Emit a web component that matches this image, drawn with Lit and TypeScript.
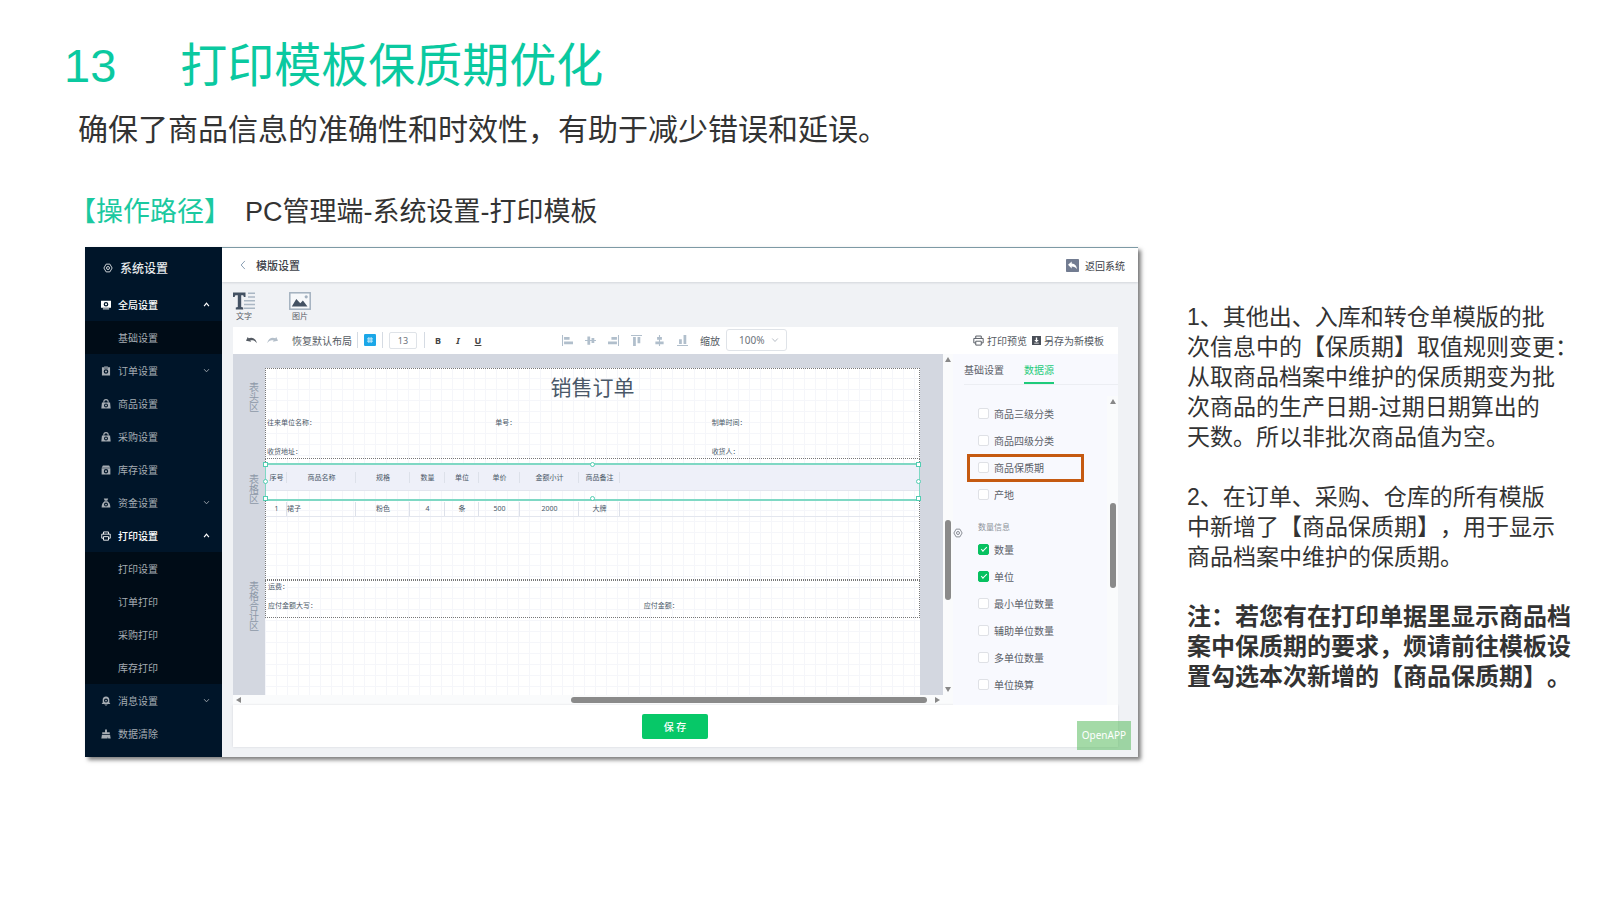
import { LitElement, html, css, svg, nothing } from "lit";
import { customElement, property } from "lit/decorators.js";
import { classMap } from "lit/directives/class-map.js";

const HEX = "M5 1.8h6L14.6 8 11 14.2H5L1.4 8z";

/* Icon shapes on a 16 x 16 field; colour comes from currentColor. */
const ICONS: Record<string, unknown> = {
  nut: svg`<path d=${HEX} fill="none" stroke="currentColor" stroke-width="1.4"/><circle cx="8" cy="8" r="2.4" fill="none" stroke="currentColor" stroke-width="1.4"/>`,
  monitor: svg`<path fill-rule="evenodd" fill="currentColor" d="M0 1h16v11.500H0zM8 3a3.700 3.700 0 1 0 0 7.400A3.700 3.700 0 0 0 8 3z"/><circle cx="8" cy="6.700" r="1.700" fill="currentColor"/><path fill="currentColor" d="M3 13.500h10V15H3z"/>`,
  clipboard: svg`<path fill-rule="evenodd" fill="currentColor" d="M1.500 2H5V.8h6V2h3.500v13.200h-13zM8 5a3.700 3.700 0 1 0 0 7.400A3.700 3.700 0 0 0 8 5z"/><circle cx="8" cy="8.700" r="1.700" fill="currentColor"/><path d="M5 3.300h6" stroke="#001529"/>`,
  bag: svg`<path d="M4.500 6V4.500a3.500 3.500 0 0 1 7 0V6" fill="none" stroke="currentColor" stroke-width="1.700"/><path fill-rule="evenodd" fill="currentColor" d="M1.500 5.500h13L15.500 15H.5zM8 7a3.200 3.200 0 1 0 0 6.400A3.200 3.200 0 0 0 8 7z"/><circle cx="8" cy="10.200" r="1.500" fill="currentColor"/>`,
  store: svg`<path fill="currentColor" d="M3 .8h10l2 3.400H1z"/><path fill-rule="evenodd" fill="currentColor" d="M1 5.200h14V15H1zM8 6.500a3.500 3.500 0 1 0 0 7 3.500 3.500 0 0 0 0-7z"/><circle cx="8" cy="10" r="1.600" fill="currentColor"/>`,
  money: svg`<path fill="currentColor" d="M4.500.8h7L10 4.200H6z"/><path fill-rule="evenodd" fill="currentColor" d="M5.500 5.200h5C13.500 7.500 15 10.500 15 15H1c0-4.500 1.500-7.500 4.500-9.800zM8 7.200a3.200 3.200 0 1 0 0 6.400 3.200 3.200 0 0 0 0-6.400z"/><circle cx="8" cy="10.400" r="1.400" fill="currentColor"/>`,
  printer: svg`<g fill="none" stroke="currentColor" stroke-width="1.400"><path d="M4 5V1.500h8V5M4 11.500H1.200V5h13.600v6.500H12"/><path d="M4 9h8v5.700H4z"/></g>`,
  bell: svg`<path fill-rule="evenodd" fill="currentColor" d="M8 .6c3.500 0 5.300 2.500 5.300 5.500v4.200L15 12.700H1l1.700-2.400V6.100C2.700 3.100 4.500.6 8 .6zM8 4a3.200 3.200 0 1 0 0 6.400A3.200 3.200 0 0 0 8 4z"/><circle cx="8" cy="7.200" r="1.400" fill="currentColor"/><path fill="currentColor" d="M5 13.700h6L8 15.600z"/>`,
  broom: svg`<path fill="currentColor" d="M6.500.8h3V5H14v3H2V5h4.500zM1.500 9h13l1 6.300h-4l-.5-2.800-.5 2.800H.5z"/>`,
  up: svg`<path d="M2.500 11.500 8 5l5.500 6.500" fill="none" stroke="currentColor" stroke-width="2.800"/>`,
  down: svg`<path d="M2.500 5l5.500 6 5.500-6" fill="none" stroke="currentColor" stroke-width="2"/>`,
  left: svg`<path d="M11 1.500 5 8l6 6.500" fill="none" stroke="currentColor" stroke-width="1.600"/>`,
  undo: svg`<path fill="currentColor" d="M0 8.500 2.500 3l1.400 1.800C8.500 2.500 14 4.500 15.800 12c-2.600-4-6-5-9.600-3.900l1.400 1.800z"/>`,
  redo: svg`<path fill="currentColor" d="M16 8.500 13.500 3l-1.400 1.800C7.500 2.500 2 4.500.2 12c2.600-4 6-5 9.600-3.900L8.400 9.900z"/>`,
  cells: svg`<rect width="16" height="16" rx="1.500" fill="#1ba7e8"/><path d="M6.500 4v8M9.500 4v8M4 6.500h8M4 9.500h8" stroke="#d5effb" stroke-width="1.200"/>`,
  alignLeft: svg`<path fill="currentColor" d="M0 0h1.500v16H0zM3 3h8v4H3zM3 9.500h13v4H3z"/>`,
  alignCenter: svg`<path fill="currentColor" d="M0 7.200h16v1.600H0zM3.500 2h4v12h-4zM9.500 4.500h4v7h-4z"/>`,
  alignRight: svg`<path fill="currentColor" d="M14.500 0H16v16h-1.500zM5 3h8v4H5zM0 9.500h13v4H0z"/>`,
  alignTop: svg`<path fill="currentColor" d="M0 0h16v1.500H0zM3 3h4v13H3zM9.500 3h4v9h-4z"/>`,
  alignMiddle: svg`<path fill="currentColor" d="M7.200 0h1.600v16H7.200zM4.500 3h7v4h-7zM2 9.500h12v4H2z"/>`,
  alignBottom: svg`<path fill="currentColor" d="M0 14.500h16V16H0zM3 6h4v7H3zM9.500 0h4v13h-4z"/>`,
  save: svg`<path fill="#4a4f58" d="M0 0h16v16H0z"/><path fill="#fff" d="M6.800 2.500h2.400V7H12L8 11 4 7h2.800zM4 12h8v1.500H4z"/>`,
  back: svg`<rect width="16" height="16" rx="1" fill="#727c91"/><path fill="#fff" d="M2.500 7.200 7 3v2.500c4.200.2 6.300 2.800 6.500 7.200C12 10.300 10 9.200 7 9.200v2.400z"/>`,
  text: svg`<path fill="#445263" d="M0 .5h12.500v4.500h-1.600L10.200 3.300H8.200v11.700l2 .5V17.500H2.800v-2l2-.5V3.300H2.400L1.600 5H0z"/><path stroke="#aab7c4" stroke-width="1.600" d="M15 1.200h7M15 5h7M11 8.800h11M11 12.500h11M11 16.300h11"/>`,
  image: svg`<rect x=".8" y=".8" width="20.400" height="16.400" fill="#f7f9fb" stroke="#a3b1bf" stroke-width="1.500"/><path fill="#445263" d="m2.800 14.500 4.500-7.600 4 4.300 2.600-2.700 4.600 6z"/><circle cx="17.200" cy="4.800" r="1.600" fill="#a3b1bf"/>`,
};

@customElement("ui-icon")
class UiIcon extends LitElement {
  @property() name = "";
  @property() box = "0 0 16 16";
  static styles = css`
    :host { display: block; width: 10px; height: 10px; flex: none; }
    svg { display: block; width: 100%; height: 100%; overflow: visible; }
  `;
  render() {
    return html`<svg viewBox=${this.box} aria-hidden="true">${ICONS[this.name]}</svg>`;
  }
}

@customElement("scroll-bar")
class ScrollBar extends LitElement {
  @property({ type: Boolean, reflect: true }) horizontal = false;
  @property({ type: Boolean }) open = false;
  @property({ type: Array }) parts: number[] = [1, 1, 1];
  static styles = css`
    :host { display: flex; flex-direction: column; align-items: center; background: #fafbfc; }
    :host([horizontal]) { flex-direction: row; }
    .arrow { width: 0; height: 0; flex: none; margin: 3px; border: 3px solid transparent; }
    .up { border-bottom: 5px solid #888; border-top: 0; }
    .down { border-top: 5px solid #888; border-bottom: 0; }
    .left { border-right: 5px solid #888; border-left: 0; }
    .right { border-left: 5px solid #888; border-right: 0; }
    .thumb { width: 6px; border-radius: 3px; background: #8a8a8a; }
    :host([horizontal]) .thumb { width: auto; height: 6px; }
  `;
  render() {
    const [a, b, c] = this.parts;
    return html`
      <span class="arrow ${this.horizontal ? "left" : "up"}"></span>
      <span style="flex:${a}"></span>
      <span class="thumb" style="flex:${b}"></span>
      <span style="flex:${c}"></span>
      ${this.open ? nothing : html`<span class="arrow ${this.horizontal ? "right" : "down"}"></span>`}
    `;
  }
}

type MenuItem = { label: string; icon?: string; arrow?: string; sub?: boolean; on?: boolean };

@customElement("side-menu")
class SideMenu extends LitElement {
  items: MenuItem[] = [
    { label: "全局设置", icon: "monitor", arrow: "up", on: true },
    { label: "基础设置", sub: true },
    { label: "订单设置", icon: "clipboard", arrow: "down" },
    { label: "商品设置", icon: "bag" },
    { label: "采购设置", icon: "bag" },
    { label: "库存设置", icon: "store" },
    { label: "资金设置", icon: "money", arrow: "down" },
    { label: "打印设置", icon: "printer", arrow: "up", on: true },
    { label: "打印设置", sub: true },
    { label: "订单打印", sub: true },
    { label: "采购打印", sub: true },
    { label: "库存打印", sub: true },
    { label: "消息设置", icon: "bell", arrow: "down" },
    { label: "数据清除", icon: "broom" },
  ];
  static styles = css`
    :host { display: block; background: #001529; color: #a6adb4; font-size: 10px; padding-bottom: 7px; }
    .head { display: flex; align-items: center; gap: 7px; height: 41px; padding-left: 18px; color: #e6e9ec; font-size: 12px; font-weight: 500; }
    .item { display: flex; align-items: center; gap: 7px; height: 33px; padding: 0 12px 0 16px; color: inherit; text-decoration: none; }
    .sub { background: #000c17; padding-left: 33px; }
    .on { color: #fff; font-weight: 500; }
    .arrow { width: 7px; height: 7px; margin-left: auto; }
  `;
  render() {
    return html`
      <div class="head"><ui-icon name="nut"></ui-icon>系统设置</div>
      <nav>
        ${this.items.map(
          (i) => html`<a href="#" class=${classMap({ item: true, sub: !!i.sub, on: !!i.on })}>
            ${i.icon ? html`<ui-icon name=${i.icon}></ui-icon>` : nothing}<span>${i.label}</span>
            ${i.arrow ? html`<ui-icon class="arrow" name=${i.arrow}></ui-icon>` : nothing}
          </a>`
        )}
      </nav>
    `;
  }
}

@customElement("tool-bar")
class ToolBar extends LitElement {
  static styles = css`
    :host { display: flex; align-items: center; box-sizing: border-box; height: 27px; background: #fff; padding: 0 14px 1px 13px; color: #555b63; }
    button { display: flex; align-items: center; gap: 4px; padding: 0; border: 0; background: none; color: inherit; font: inherit; font-size: 10px; white-space: nowrap; }
    .group { display: flex; align-items: center; gap: 10px; }
    .history { padding-right: 5px; }
    .history ui-icon, .print ui-icon, .align ui-icon { width: 11px; height: 11px; }
    .redo { color: #b4bfca; }
    .reset { margin-left: 4px; }
    .bar { width: 1px; height: 16px; background: #d5dbe3; margin-right: 6px; }
    .cells { margin-right: 6px; }
    .cells ui-icon { width: 12px; height: 12px; }
    .size { box-sizing: border-box; width: 28px; height: 17px; margin-right: 7px; padding: 0; border: 1px solid #dfe3e8; border-radius: 2px; text-align: center; font: inherit; font-size: 9px; color: #6c727a; }
    .format { gap: 14px; padding-left: 4px; }
    .format button { font-size: 9px; width: 6px; justify-content: center; font-weight: 700; color: #444; }
    .italic { font-style: italic; }
    .underline { text-decoration: underline; }
    .align { gap: 12px; margin-left: 81px; color: #b1bfcc; }
    .zoom { display: flex; align-items: center; gap: 6px; margin-left: 12px; font-size: 10px; position: relative; }
    select { box-sizing: border-box; appearance: none; width: 61px; height: 22px; padding: 0 12px; border: 1px solid #dfe3e8; border-radius: 3px; background: #fff; font: inherit; color: #6c727a; }
    .chev { position: absolute; right: 8px; width: 8px; height: 8px; color: #b8bec6; }
    .right { margin-left: auto; gap: 5px; }
    .print { gap: 3px; }
    .keep { gap: 3px; }
    .keep ui-icon { width: 9px; height: 9px; }
  `;
  render() {
    return html`
      <div class="group history">
        <button aria-label="撤销"><ui-icon name="undo"></ui-icon></button>
        <button aria-label="重做" class="redo"><ui-icon name="redo"></ui-icon></button>
        <button class="reset">恢复默认布局</button>
      </div>
      <span class="bar"></span>
      <button class="cells" aria-label="网格"><ui-icon name="cells"></ui-icon></button>
      <span class="bar"></span>
      <input class="size" aria-label="字号" value="13" />
      <span class="bar"></span>
      <div class="group format">
        <button>B</button><button class="italic">I</button><button class="underline">U</button>
      </div>
      <div class="group align">
        ${["Left", "Center", "Right", "Top", "Middle", "Bottom"].map(
          (n) => html`<button aria-label=${n}><ui-icon name=${"align" + n}></ui-icon></button>`
        )}
      </div>
      <label class="zoom">缩放<select><option>100%</option></select><ui-icon class="chev" name="down"></ui-icon></label>
      <div class="group right">
        <button class="print"><ui-icon name="printer"></ui-icon>打印预览</button>
        <button class="keep"><ui-icon name="save"></ui-icon>另存为新模板</button>
      </div>
    `;
  }
}

@customElement("print-sheet")
class PrintSheet extends LitElement {
  static styles = css`
    :host { display: grid; grid-template-columns: 32px minmax(0, 1fr) 23px; grid-template-rows: 91px 121px 38px 1fr; padding-top: 14px; background: #d3d7e0; color: #4a5868; font-size: 7px; overflow: hidden; }
    .zone { grid-column: 1; margin: 0 6px 0 16px; width: 10px; font-size: 10px; line-height: 10px; color: #8e99a8; }
    .z1 { grid-row: 1; padding-top: 14px; }
    .z2 { grid-row: 2; padding-top: 15px; }
    .z3 { grid-row: 3 / 5; padding-top: 1px; }
    .paper { grid-column: 2; grid-row: 1 / 5; display: grid; grid-template-rows: subgrid; background-color: #fff;
      background-image: linear-gradient(#f5f6fa 1px, transparent 1px), linear-gradient(90deg, #f5f6fa 1px, transparent 1px); background-size: 11px 11px; background-position: 0 10px, 11px 0; }
    section { border: 1px dotted #777; min-width: 0; }
    .head { display: flex; flex-direction: column; }
    h2 { margin: 4px 0 0; font-size: 21px; line-height: 28px; font-weight: 400; text-align: center; }
    .fields { display: grid; grid-template-columns: 229fr 217fr 208fr; row-gap: 19px; line-height: 10px; margin-top: 17px; padding-left: 1px; }
    .last { grid-column: 3; }
    .body { position: relative; padding-top: 5px; border-top: 0; }
    table { width: 100%; border-collapse: collapse; table-layout: fixed; line-height: 10px; }
    th, td { padding: 0; font-weight: 400; text-align: center; background: linear-gradient(#dde1ea, #dde1ea) no-repeat; white-space: nowrap; }
    th { height: 25px; padding-top: 1px; background-size: 1px 11px; background-position: right center; }
    thead { background: #eef0f9; }
    td { height: 14px; padding-top: 11px; background-size: 1px 14px; background-position: right bottom; }
    tr { border-bottom: 1px solid #e3e6ee; }
    .name { text-align: left; }
    th:last-child, td:last-child { background: none; }
    .selection { position: absolute; inset: 4px -1px auto -1px; height: 34px; border: 1px solid #7fd8c4; border-width: 2px 1px; }
    .handle { position: absolute; box-sizing: border-box; width: 5px; height: 5px; margin: -3px; border: 1px solid #53cdb2; background: #fff; }
    .round { border-radius: 50%; }
    .sum { display: grid; grid-template-columns: 377fr 276fr; line-height: 10px; padding: 1px 0 0 2px; align-content: start; row-gap: 9px; }
    .sum > :first-child { grid-column: 1 / 3; }
  `;
  handles = [
    [0, 0], [50, 0], [100, 0], [0, 50], [100, 50], [0, 100], [50, 100], [100, 100],
  ];
  widths = [21, 69, 54, 35, 34, 41, 59, 41];
  heads = ["序号", "商品名称", "规格", "数量", "单位", "单价", "金额小计", "商品备注", ""];
  row = ["1", "裙子", "粉色", "4", "条", "500", "2000", "大牌", ""];
  render() {
    return html`
      <div class="zone z1">表头区</div>
      <div class="zone z2">表格区</div>
      <div class="zone z3">表格合计区</div>
      <div class="paper">
        <section class="head">
          <h2>销售订单</h2>
          <div class="fields">
            <span>往来单位名称：</span><span>单号：</span><span>制单时间：</span>
            <span>收货地址：</span><span class="last">收货人：</span>
          </div>
        </section>
        <section class="body">
          <table>
            <colgroup>${this.widths.map((w) => html`<col style="width:${w}px" />`)}<col /></colgroup>
            <thead><tr>${this.heads.map((h) => html`<th>${h}</th>`)}</tr></thead>
            <tbody><tr>${this.row.map((c, i) => html`<td class=${classMap({ name: i === 1 })}>${c}</td>`)}</tr></tbody>
          </table>
          <div class="selection">
            ${this.handles.map(
              ([x, y]) => html`<span class=${classMap({ handle: true, round: x === 50 || y === 50 })} style="left:${x}%;top:${y}%"></span>`
            )}
          </div>
        </section>
        <section class="sum"><span>运费：</span><span>应付金额大写：</span><span>应付金额：</span></section>
      </div>
    `;
  }
}

@customElement("data-panel")
class DataPanel extends LitElement {
  static styles = css`
    :host { display: flex; flex-direction: column; position: relative; background: #f8f9fe; color: #5b6068; font-size: 10px; overflow: hidden; }
    .tabs { display: flex; gap: 20px; margin-left: 11px; border-bottom: 1px solid #eceef3; height: 30px; }
    .tabs button { padding: 3px 0 0; border: 0; border-bottom: 2px solid transparent; background: none; font: inherit; color: inherit; }
    .tabs .active { color: #1fcb7b; border-color: #1fcb7b; }
    .scroll { display: flex; flex: 1; margin-top: 11px; min-height: 0; }
    .list { flex: 1; padding: 4px 0 0 25px; }
    label { display: flex; align-items: center; gap: 5px; height: 27px; position: relative; width: max-content; }
    .mark { position: absolute; left: -11px; top: 0; box-sizing: border-box; width: 117px; height: 28px; border: 3px solid #c55a11; }
    input { appearance: none; box-sizing: border-box; display: grid; place-items: center; margin: 0; width: 11px; height: 11px; border: 1px solid #dfe1e6; border-radius: 2px; background: #fff; }
    input:checked { background: #07c160; border-color: #07c160; }
    input:checked::after { content: ""; width: 5px; height: 2px; border: solid #fff; border-width: 0 0 1px 1px; transform: translateY(-1px) rotate(-45deg); }
    .group { height: 28px; box-sizing: border-box; padding-top: 13px; line-height: 12px; font-size: 8px; color: #8f949b; }
    .nut { position: absolute; left: 0; top: 174px; color: #7b8087; }
    scroll-bar { width: 11px; }
  `;
  check(label: string, checked = false, mark = false) {
    return html`<label><input type="checkbox" ?checked=${checked} />${label}${mark ? html`<span class="mark"></span>` : nothing}</label>`;
  }
  render() {
    return html`
      <div class="tabs"><button>基础设置</button><button class="active">数据源</button></div>
      <div class="scroll">
        <div class="list">
          ${this.check("商品三级分类")} ${this.check("商品四级分类")} ${this.check("商品保质期", false, true)} ${this.check("产地")}
          <div class="group">数量信息</div>
          ${this.check("数量", true)} ${this.check("单位", true)} ${this.check("最小单位数量")} ${this.check("辅助单位数量")}
          ${this.check("多单位数量")} ${this.check("单位换算")}
        </div>
        <scroll-bar open .parts=${[96, 85, 117]}></scroll-bar>
      </div>
      <ui-icon class="nut" name="nut"></ui-icon>
    `;
  }
}

@customElement("app-root")
class AppRoot extends LitElement {
  static styles = css`
    :host { display: block; min-height: 100vh; box-sizing: border-box; padding: 35px 29px 40px 64px; background: #fff; color: #333; font-family: "Liberation Sans", "Noto Sans CJK SC", sans-serif; text-spacing-trim: space-all; }
    h1 { display: flex; gap: 64px; margin: 0; font-size: 47px; line-height: 62px; font-weight: 400; color: #0ac9a0; }
    .lead { margin: 13px 0 0 14px; font-size: 30px; line-height: 40px; }
    .path { margin: 44px 0 0 5px; font-size: 27px; line-height: 36px; display: flex; gap: 14px; }
    .path b { font-weight: 400; color: #1bc9a0; }
    .columns { display: flex; align-items: flex-start; gap: 49px; margin: 17px 0 0 21px; }
    .notes { flex: none; width: 384px; margin-top: 55px; font-size: 23px; line-height: 30px; white-space: nowrap; }
    .notes p { margin: 0 0 30px; }
    .notes .strong { font-size: 24px; font-weight: 700; margin: 0; }
    .app { flex: 1; min-width: 0; display: grid; grid-template-columns: 137px minmax(0, 1fr); position: relative; background: #f0f2f5; box-shadow: 3px 3px 4px rgba(0, 0, 0, 0.5); font-family: "Noto Sans", "Noto Sans CJK SC", sans-serif; font-size: 10px; }
    .main { display: flex; flex-direction: column; }
    header { display: flex; align-items: center; gap: 8px; height: 34px; padding: 0 13px 0 16px; background: #fff; border-top: 1px solid #7d9aa5; box-shadow: 0 1px 2px rgba(0, 20, 40, 0.12); color: #3c4047; }
    header h2 { margin: 0; font-size: 11px; font-weight: 500; }
    .prev { color: #8ba0b5; }
    .return { display: flex; align-items: center; gap: 6px; margin-left: auto; color: inherit; text-decoration: none; }
    .return ui-icon { width: 13px; height: 13px; }
    .work { flex: 1; display: flex; flex-direction: column; padding: 0 20px 10px 11px; }
    .insert { display: flex; gap: 34px; height: 35px; padding-top: 10px; }
    .insert button { display: flex; flex-direction: column; align-items: center; width: 22px; padding: 0; border: 0; background: none; font: inherit; font-size: 8px; line-height: 12px; color: #5b6068; }
    .insert ui-icon { width: 22px; height: 18px; }
    .stage { display: grid; grid-template-columns: minmax(0, 1fr) 10px 165px; grid-template-rows: 341px 10px; }
    data-panel { grid-column: 3; grid-row: 1 / 3; }
    .across { grid-column: 1; grid-row: 2; }
    .corner { background: #fafbfc; }
    footer { flex: 1; display: flex; align-items: center; justify-content: center; min-height: 42px; background: #fff; box-shadow: 0 0 2px rgba(0, 20, 40, 0.12); }
    .save { width: 66px; height: 25px; margin-right: 1px; border: 0; border-radius: 2px; background: #07c868; color: #fff; font: inherit; font-weight: 500; padding: 0; }
    .open { position: absolute; right: 7px; bottom: 7px; padding: 0 5px; line-height: 29px; background: rgba(90, 187, 95, 0.55); color: #fff; }
  `;
  render() {
    return html`
      <h1><span>13</span><span>打印模板保质期优化</span></h1>
      <p class="lead">确保了商品信息的准确性和时效性，有助于减少错误和延误。</p>
      <p class="path"><b>【操作路径】</b><span>PC管理端-系统设置-打印模板</span></p>
      <div class="columns">
        <div class="app">
          <side-menu></side-menu>
          <div class="main">
            <header>
              <ui-icon class="prev" name="left"></ui-icon>
              <h2>模版设置</h2>
              <a class="return" href="#"><ui-icon name="back"></ui-icon>返回系统</a>
            </header>
            <div class="work">
              <div class="insert">
                <button><ui-icon name="text" box="0 0 22 18"></ui-icon>文字</button>
                <button><ui-icon name="image" box="0 0 22 18"></ui-icon>图片</button>
              </div>
              <tool-bar></tool-bar>
              <div class="stage">
                <print-sheet></print-sheet>
                <scroll-bar .parts=${[155, 79, 84]}></scroll-bar>
                <data-panel></data-panel>
                <scroll-bar class="across" horizontal .parts=${[327, 355, 5]}></scroll-bar>
                <span class="corner"></span>
              </div>
              <footer><button class="save">保 存</button></footer>
            </div>
          </div>
          <span class="open">OpenAPP</span>
        </div>
        <div class="notes">
          <p>1、其他出、入库和转仓单模版的批<br />次信息中的【保质期】取值规则变更：<br />从取商品档案中维护的保质期变为批<br />次商品的生产日期-过期日期算出的<br />天数。所以非批次商品值为空。</p>
          <p>2、在订单、采购、仓库的所有模版<br />中新增了【商品保质期】，用于显示<br />商品档案中维护的保质期。</p>
          <p class="strong">注：若您有在打印单据里显示商品档<br />案中保质期的要求，烦请前往模板设<br />置勾选本次新增的【商品保质期】。</p>
        </div>
      </div>
    `;
  }
}
